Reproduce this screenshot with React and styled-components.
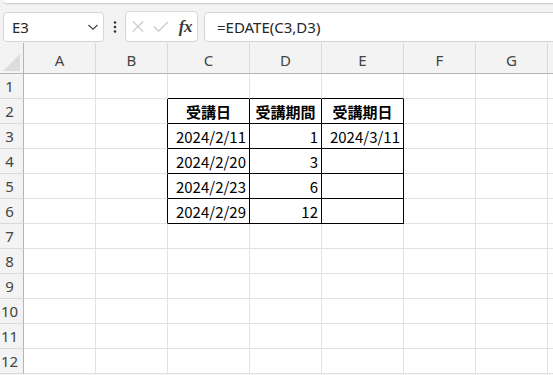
import React from "react";
import styled, { createGlobalStyle } from "styled-components";

const Global = createGlobalStyle`
  html, body { margin: 0; padding: 0; background: #f3f3f3; }
  body { font-family: "Noto Sans", "Noto Sans CJK JP", sans-serif; }
`;

const Page = styled.div`
  width: 553px;
  height: 375px;
  overflow: hidden;
  background: #f3f3f3;
  display: flex;
  flex-direction: column;
`;

const Ribbon = styled.div`
  height: 3px;
  margin-left: 3px;
  background: #ffffff;
  border-bottom: 1px solid #d2d2d2;
  border-bottom-left-radius: 6px;
  box-shadow: 0 1px 1px rgba(0, 0, 0, 0.05);
`;

const FormulaBar = styled.div`
  height: 39px;
  box-sizing: border-box;
  padding: 8px 0 1px 3px;
  display: flex;
  align-items: stretch;
`;

const Box = styled.div`
  box-sizing: border-box;
  background: #ffffff;
  border: 1px solid #d6d6d6;
  border-radius: 4px;
  display: flex;
  align-items: center;
`;

const NameBox = styled(Box)`
  width: 101px;
  padding: 0 4px 0 8px;
  justify-content: space-between;
  font-size: 15px;
  color: #262626;
`;

const Handle = styled.div`
  width: 21px;
  display: flex;
  align-items: center;
  justify-content: center;
`;

const FxBox = styled(Box)`
  width: 73px;
  margin-top: -1px;
  padding: 0 5px 0 6px;
  gap: 9px;
`;

const FxText = styled.span`
  font-family: "Liberation Serif", "DejaVu Serif", serif;
  font-style: italic;
  font-weight: bold;
  font-size: 17px;
  color: #3a3a3a;
  margin-left: 1px;
  letter-spacing: -0.5px;
`;

const FormulaBox = styled(Box)`
  margin-left: 6px;
  flex: 1;
  margin-right: -10px;
  padding-left: 12px;
  font-size: 15px;
  color: #262626;
`;

const Grid = styled.div`
  display: grid;
  grid-template-columns: 24px 72px 72px 82px 72px 82px 72px 72px 1fr;
  grid-template-rows: 31px repeat(12, 25px);
`;

const Corner = styled.div`
  box-sizing: border-box;
  border-right: 1px solid #b4b4b4;
  border-bottom: 1px solid #b4b4b4;
  display: flex;
  align-items: flex-end;
  justify-content: flex-start;
  padding: 0 0 2px 3px;
`;

const ColHead = styled.div`
  box-sizing: border-box;
  border-right: 1px solid #d9d9d9;
  border-bottom: 1px solid #b4b4b4;
  margin-top: 0;
  display: flex;
  align-items: center;
  justify-content: center;
  padding-top: 4px;
  font-size: 15px;
  color: #444;
`;

const RowHead = styled.div`
  box-sizing: border-box;
  border-right: 1px solid #b4b4b4;
  border-bottom: 1px solid #dadada;
  display: flex;
  align-items: center;
  justify-content: center;
  padding-right: 4px;
  font-size: 15px;
  color: #444;
`;

const Cell = styled.div`
  box-sizing: border-box;
  background: #ffffff;
  border-right: 1px solid ${(p) => (p.$rb ? "#000" : "#e1e1e1")};
  border-bottom: 1px solid ${(p) => (p.$bb ? "#000" : "#e1e1e1")};
  display: flex;
  align-items: center;
  justify-content: ${(p) =>
    p.$align === "center" ? "center" : p.$align === "right" ? "flex-end" : "flex-start"};
  padding: 0 3px 0 3px;
  font-family: "Noto Sans CJK JP", sans-serif;
  font-size: 15px;
  font-weight: ${(p) => (p.$bold ? 700 : 400)};
  color: #000;
  white-space: nowrap;
  overflow: visible;
`;

const cols = ["A", "B", "C", "D", "E", "F", "G", ""];

const table = {
  2: { C: ["受講日", "center", true], D: ["受講期間", "center", true], E: ["受講期日", "center", true] },
  3: { C: ["2024/2/11", "right"], D: ["1", "right"], E: ["2024/3/11", "right"] },
  4: { C: ["2024/2/20", "right"], D: ["3", "right"] },
  5: { C: ["2024/2/23", "right"], D: ["6", "right"] },
  6: { C: ["2024/2/29", "right"], D: ["12", "right"] },
};

const inTable = (r, c) => r >= 2 && r <= 6 && ["C", "D", "E"].includes(c);

export default function App() {
  const rows = Array.from({ length: 12 }, (_, i) => i + 1);
  return (
    <Page>
      <Global />
      <Ribbon />
      <FormulaBar>
        <NameBox>
          <span>E3</span>
          <svg width="12" height="8" viewBox="0 0 12 8">
            <path d="M1.5 2 L6 6.2 L10.5 2" fill="none" stroke="#444" strokeWidth="1.2" />
          </svg>
        </NameBox>
        <Handle>
          <svg width="4" height="12" viewBox="0 0 4 12">
            <circle cx="2" cy="1.5" r="1.3" fill="#333" />
            <circle cx="2" cy="6" r="1.3" fill="#333" />
            <circle cx="2" cy="10.5" r="1.3" fill="#333" />
          </svg>
        </Handle>
        <FxBox>
          <svg width="13" height="13" viewBox="0 0 13 13">
            <path d="M1 1 L12 12 M12 1 L1 12" stroke="#c4c4c4" strokeWidth="1.2" fill="none" />
          </svg>
          <svg width="17" height="13" viewBox="0 0 17 13">
            <path d="M1 6.5 L6 11.5 L16 1.5" stroke="#c4c4c4" strokeWidth="1.2" fill="none" />
          </svg>
          <FxText>fx</FxText>
        </FxBox>
        <FormulaBox>=EDATE(C3,D3)</FormulaBox>
      </FormulaBar>
      <Grid>
        <Corner>
          <svg width="17" height="17" viewBox="0 0 17 17">
            <polygon points="0,17 17,0 17,17" fill="#dcdcdc" />
          </svg>
        </Corner>
        {cols.map((c, i) => (
          <ColHead key={"h" + i}>{c}</ColHead>
        ))}
        {rows.map((r) => (
          <React.Fragment key={r}>
            <RowHead>{r}</RowHead>
            {cols.map((c, i) => {
              const d = table[r] && table[r][c];
              const next = cols[i + 1];
              const rb = inTable(r, c) || (next && inTable(r, next));
              const bb = inTable(r, c) || inTable(r + 1, c);
              return (
                <Cell key={c + i} $rb={rb} $bb={bb} $align={d ? d[1] : "left"} $bold={d ? d[2] : false}>
                  {d ? d[0] : ""}
                </Cell>
              );
            })}
          </React.Fragment>
        ))}
      </Grid>
    </Page>
  );
}
